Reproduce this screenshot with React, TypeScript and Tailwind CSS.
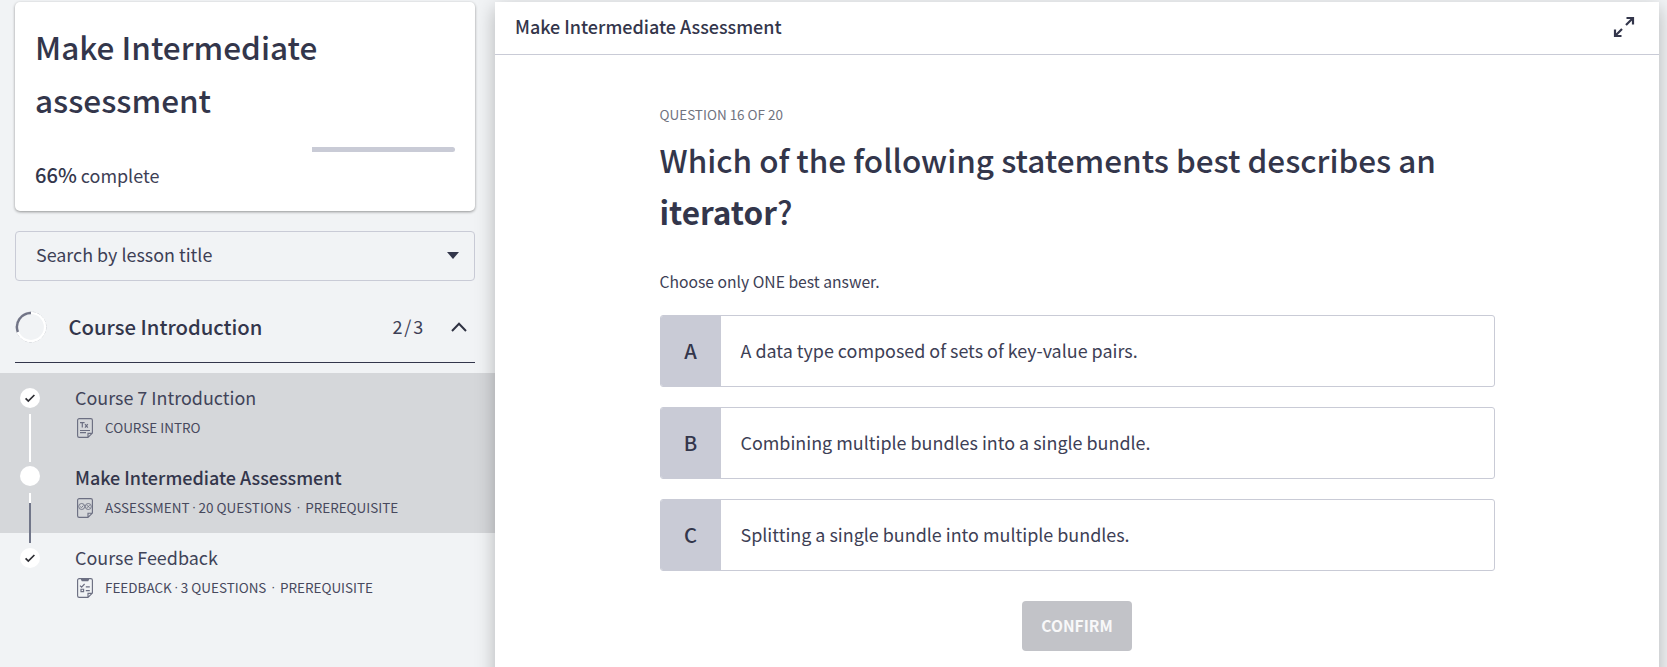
import type { ReactNode } from "react";

function Check() {
  return (
    <svg viewBox="0 0 20 20" className="size-5 shrink-0">
      <circle cx="10" cy="10" r="10" fill="#fff" />
      <path d="M5.6 10.3 8.3 13 14.4 7" fill="none" stroke="#2d2d33" strokeWidth="1.7" />
    </svg>
  );
}

function PageOutline({ children }: { children: ReactNode }) {
  return (
    <svg viewBox="0 0 16 20" className="mt-px h-5 w-4 shrink-0" fill="none" stroke="#6c6f82" strokeWidth="1.15">
      <path d="M11 19.4H2.2A1.6 1.6 0 0 1 .6 17.8V2.2A1.6 1.6 0 0 1 2.2.6h11.6a1.6 1.6 0 0 1 1.6 1.6v12.9L11 19.4v-4.1h4.4" />
      {children}
    </svg>
  );
}

function TextIcon() {
  return (
    <PageOutline>
      <path d="M3 4.6h4.6M5.3 4.6v5M8 6.2l2.8 3.4M10.8 6.2 8 9.6" strokeWidth="1.2" />
      <path d="M3 12.5h10M3 14.6h6" />
    </PageOutline>
  );
}

function AssessmentIcon() {
  return (
    <PageOutline>
      <circle cx="4.7" cy="8.5" r="3" strokeWidth=".9" />
      <circle cx="11.3" cy="8.5" r="3" strokeWidth=".9" />
      <path d="m3.2 8.5 1.2 1.2 2-2.2M10 7.2l2.6 2.6M12.6 7.2 10 9.8" strokeWidth=".9" />
    </PageOutline>
  );
}

function FeedbackIcon() {
  return (
    <PageOutline>
      <path d="M4 0h8v1.8L11.2 3.2H4.8L4 1.8z" fill="#6c6f82" stroke="none" />
      <path d="m3 7.6 1.6 1.6L7.6 6M8.8 8.9h4M8.8 12.6h4" />
      <path d="M4 11.2h2.6v2.4H4z" />
    </PageOutline>
  );
}

function Dot({ wide }: { wide?: boolean }) {
  return (
    <span className={wide ? "w-[13.5px] text-center font-['Liberation_Sans']" : "w-[9px] text-center font-['Liberation_Sans']"}>·</span>
  );
}

function Lesson({ rail, title, icon, bold, children }: { rail: ReactNode; title: string; icon: ReactNode; bold?: boolean; children: ReactNode }) {
  return (
    <li className="flex h-20 pl-5">
      <div className="flex w-5 flex-col items-center">{rail}</div>
      <div className="pt-[9px] pl-[35px]">
        <div className={bold ? "text-[17.97px] leading-[30px] font-medium" : "text-[17.92px] leading-[30px] text-[#414459]"}>{title}</div>
        <div className="mt-[5px] flex pl-[2px]">
          {icon}
          <div className="ml-3 flex text-[13.48px] leading-5 whitespace-pre text-[#47495d]">{children}</div>
        </div>
      </div>
    </li>
  );
}

const answers = [
  { key: "A", text: "A data type composed of sets of key-value pairs." },
  { key: "B", text: "Combining multiple bundles into a single bundle." },
  { key: "C", text: "Splitting a single bundle into multiple bundles." },
];

export default function App() {
  return (
    <div className="flex h-screen overflow-hidden bg-[#f1f3f5] pt-[2px] font-['Noto_Sans_CJK_SC',sans-serif] text-[#33364b]">
      <aside className="w-[495px] shrink-0">
        <section className="mx-[15px] mr-5 h-[209px] rounded-[5px] bg-white px-5 pt-[18px] shadow-[0_1px_3px_rgba(0,0,0,0.4)]">
          <h1 className="w-[400px] text-[31.5px] leading-[53px] font-medium">Make Intermediate<br />assessment</h1>
          <div className="mt-[21px] flex h-[5px] justify-end">
            <div className="w-[143px] rounded-r-full bg-[#c9cbd6]" />
          </div>
          <p className="mt-2 text-[17.95px] leading-[30px] text-[#3d4055]">
            <span className="text-[20.1px] font-medium text-[#33364b]">66%</span> complete
          </p>
        </section>

        <div className="mx-[15px] mt-5 mr-5 flex h-[50px] items-center justify-between rounded-[4px] border border-[#c9cbd6] pr-[15px] pb-[3px] pl-5">
          <span className="text-[17.9px] text-[#3d4055]">Search by lesson title</span>
          <svg viewBox="0 0 12 7" className="mt-px h-[7px] w-3"><path d="M0 0h12L6 7z" fill="#33364b" /></svg>
        </div>

        <div className="mx-[15px] mt-[10px] mr-5 flex h-[72px] items-center border-b border-[#33364b]">
          <svg viewBox="0 0 32 32" className="size-8 shrink-0" fill="none">
            <circle cx="16" cy="16" r="15" stroke="#aeb0b8" strokeWidth=".6" strokeDasharray="3 1.5" />
            <circle cx="16" cy="16" r="14" stroke="#fff" strokeWidth="2.2" />
            <path d="M16 2A14 14 0 0 0 2.9 21" stroke="#717486" strokeWidth="2.4" />
          </svg>
          <h2 className="mt-px ml-[21.5px] flex-1 text-[20.25px] leading-[30px] font-medium">Course Introduction</h2>
          <span className="text-[18px] tracking-[1.8px] text-[#3d4055]">2/3</span>
          <svg viewBox="0 0 16 10" className="mr-[8px] ml-[26px] h-[10px] w-4" fill="none"><path d="M1 9 8 1.8 15 9" stroke="#2f3242" strokeWidth="2" /></svg>
        </div>

        <ul className="mt-[10px]">
          <div className="bg-[#d5d7da]">
            <Lesson
              title="Course 7 Introduction"
              icon={<TextIcon />}
              rail={<><div className="mt-[15px] h-5"><Check /></div><div className="mt-[6px] h-12 w-[2px] shrink-0 bg-white" /></>}
            >
              COURSE INTRO
            </Lesson>
            <Lesson
              bold
              title="Make Intermediate Assessment"
              icon={<AssessmentIcon />}
              rail={<><div className="mt-[13px] size-5 shrink-0 rounded-full bg-white" /><div className="mt-[7px] h-[10px] w-[2px] shrink-0 bg-white" /><div className="relative h-10 w-[2px] shrink-0 bg-[#717689]" /></>}
            >
              ASSESSMENT<Dot />20 QUESTIONS<Dot wide />PREREQUISITE
            </Lesson>
          </div>
          <Lesson title="Course Feedback" icon={<FeedbackIcon />} rail={<div className="mt-[15px] h-5"><Check /></div>}>
            FEEDBACK<Dot />3 QUESTIONS<Dot wide />PREREQUISITE
          </Lesson>
        </ul>
      </aside>

      <main className="relative h-[760px] w-[1164px] shrink-0 bg-white shadow-[0_6px_18px_rgba(0,0,0,0.26)]">
        <header className="flex h-[53px] items-center justify-between border-b border-[#c9cbd6] pr-6 pl-5">
          <div className="pb-[3px] text-[17.97px] font-medium">Make Intermediate Assessment</div>
          <svg viewBox="0 0 22 22" className="mb-[2px] size-[22px]" fill="none" stroke="#33364b" strokeWidth="2.2">
            <path d="M13 9 20 2M13.5 2H20v6.5M9 13l-7 7M8.5 20H2v-6.5" />
          </svg>
        </header>
        <div className="flex flex-col pr-[164px] pl-[165px]">
          <div className="-ml-[0.5px] mt-[49px] text-[13.48px] leading-5 text-[#70737f]">QUESTION 16 OF 20</div>
          <h2 className="-ml-[0.5px] mt-[9px] h-[105px] text-[31.47px] leading-[52px] font-medium">
            Which of the following statements best describes an <span className="text-[31.5px] font-bold">iterator</span>?
          </h2>
          <p className="-ml-[0.5px] mt-[34px] text-[15.68px] leading-5 text-[#3d4055]">Choose only ONE best answer.</p>
          <div className="mt-[23px] flex flex-col gap-5">
            {answers.map((a) => (
              <div key={a.key} className="flex h-[72px] overflow-hidden rounded-[3px] border border-[#c9cbd6]">
                <div className="flex w-15 items-center justify-center bg-[#c9cbd6] pr-px text-[20.2px] leading-[30px] font-medium">{a.key}</div>
                <div className="flex items-center pb-[2px] pl-[19.5px] text-[17.92px] text-[#3d4055]">{a.text}</div>
              </div>
            ))}
          </div>
          <button className="mt-[30px] mr-px h-[50px] w-[110px] self-center rounded-[4px] bg-[#c2c3c8] text-[15.55px] font-bold text-[#f8f8f9]">CONFIRM</button>
        </div>
      </main>
    </div>
  );
}
